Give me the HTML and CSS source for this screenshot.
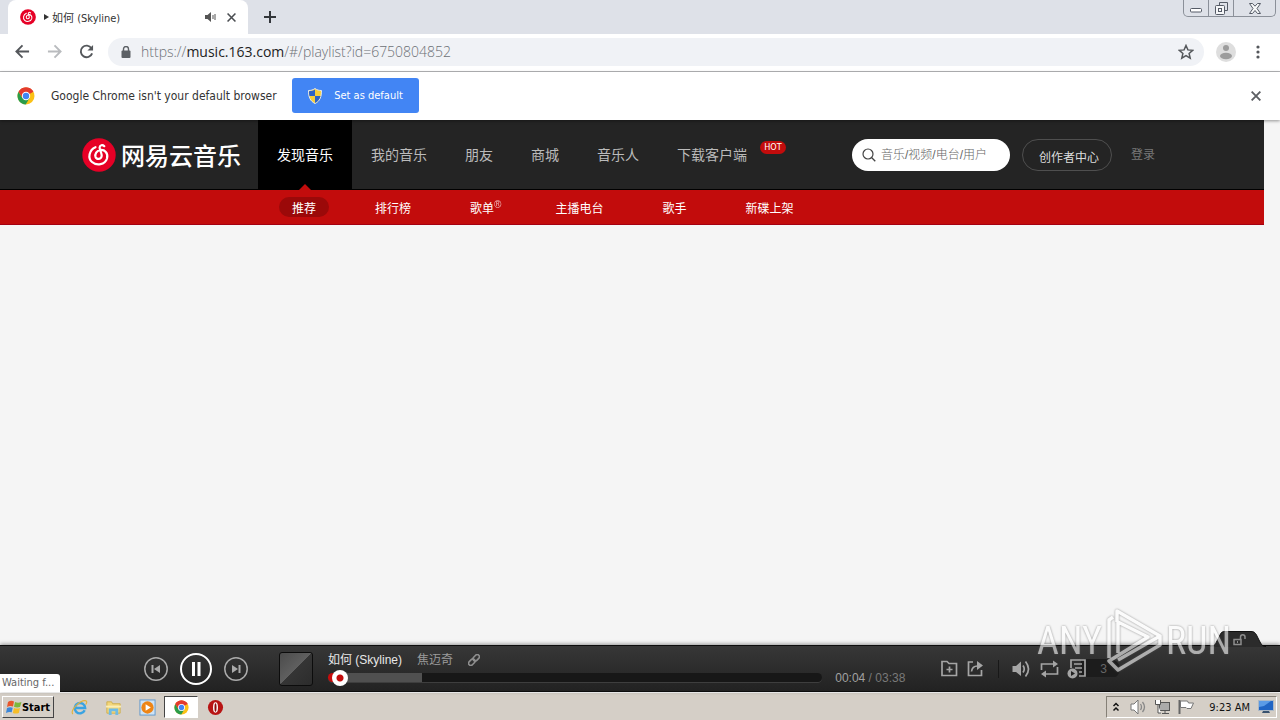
FILE: index.html
```html
<!DOCTYPE html>
<html lang="zh-CN">
<head>
    <meta charset="UTF-8">
    <meta name="viewport" content="width=device-width, initial-scale=1.0">
    <title>如何 (Skyline)</title>
    <link rel="stylesheet" href="styles.css">
</head>
<body>
    <!-- Shared symbols -->
    <svg class="defs" aria-hidden="true">
        <symbol id="chrome" viewBox="0 0 18 18">
            <circle cx="9" cy="9" r="8.5" fill="#fbc116"/>
            <path d="M9 9 L1.6 4.8 A8.5 8.5 0 0 1 16.4 4.8 Z" fill="#e33b2e"/>
            <path d="M1.6 4.8 A8.5 8.5 0 0 0 8.7 17.5 L12.6 11 L9 9 L5.4 11 Z" fill="#2a9c4a"/>
            <path d="M9 4.8 H16.4 A8.5 8.5 0 0 0 1.6 4.8 L5.4 11 Z" fill="#e33b2e"/>
            <circle cx="9" cy="9" r="4.2" fill="#fff"/>
            <circle cx="9" cy="9" r="3.2" fill="#4285f4"/>
        </symbol>
        <symbol id="netease" viewBox="0 0 34 34">
            <circle cx="17" cy="17" r="16.7" fill="#e60026"/>
            <path d="M13.5 9.2 C7 12 5.5 20 10 24 C14.500 28 23 27 25 20.500 C26.500 15 22.500 11.500 18.500 12 C14.500 12.500 12.700 16 13.500 18.800 C14.500 21.800 19.500 21.500 19.700 17.800 C19.800 15 17.500 12 17.600 9.500 C17.700 7 20.500 6.300 22.300 8.200" fill="none" stroke="#fff" stroke-width="2.200" stroke-linecap="round"/>
        </symbol>
    </svg>

    <!-- Browser chrome -->
    <div class="tabstrip">
        <div class="tab">
            <svg class="favicon" viewBox="0 0 34 34"><use href="#netease"/></svg>
            <svg class="tab-play" viewBox="0 0 5 6"><path d="M0 0 L5 3 L0 6 Z" fill="#333"/></svg>
            <span class="tab-title">如何 (Skyline)</span>
            <svg class="tab-audio" viewBox="0 0 12 10"><path d="M0 3 H2.500 L6 0 V10 L2.500 7 H0 Z" fill="#555"/><path d="M8 3 V7 M10 2 V8" stroke="#555"/></svg>
            <button class="tab-close" aria-label="Close tab"><svg viewBox="0 0 8 8"><path d="M0.500 0.500 L7.500 7.500 M7.500 0.500 L0.500 7.500" stroke="#4a4d51" stroke-width="1.400"/></svg></button>
        </div>
        <button class="new-tab" aria-label="New tab"><svg viewBox="0 0 12 12"><path d="M6 0 V12 M0 6 H12" stroke="#33363b" stroke-width="2"/></svg></button>
        <div class="window-controls">
            <button class="wc" aria-label="Minimize"><svg width="12" height="5"><rect x="0.500" y="0.500" width="11" height="3.500" rx="1" fill="#fff" stroke="#555b66"/></svg></button>
            <button class="wc" aria-label="Restore"><svg width="13" height="13"><path d="M4.500 3.500 V0.500 H12.500 V8.500 H9.500" fill="none" stroke="#555b66"/><rect x="0.500" y="3.500" width="9" height="9" rx="1" fill="#f5f6f8" stroke="#555b66"/><rect x="3.500" y="6.500" width="3" height="3" fill="none" stroke="#555b66"/></svg></button>
            <button class="wc wc-close" aria-label="Close"><svg width="12" height="11"><path d="M0.500 0.500 H3.500 L6 3.200 L8.500 0.500 H11.500 L8 5.500 L11.500 10.500 H8.500 L6 7.500 L3.500 10.500 H0.500 L4 5.500 Z" fill="#f8f9fa" stroke="#555b66"/></svg></button>
        </div>
    </div>

    <div class="toolbar">
        <button class="tool" aria-label="Back"><svg viewBox="0 0 16 16"><path d="M15 8 H2 M8 1.500 L1.500 8 L8 14.500" stroke="#54575b"/></svg></button>
        <button class="tool" aria-label="Forward"><svg viewBox="0 0 16 16"><path d="M1 8 H14 M8 1.500 L14.500 8 L8 14.500" stroke="#b9bbbe"/></svg></button>
        <button class="tool" aria-label="Reload"><svg viewBox="0 0 16 16"><path d="M13.300 4.500 A6.200 6.200 0 1 0 14 10" stroke="#54575b"/><path d="M15 1 V7 H9 Z" fill="#54575b"/></svg></button>
        <div class="omnibox">
            <svg class="lock" viewBox="0 0 10 12"><rect x="0.500" y="4.500" width="9" height="7.500" rx="1" fill="#5c6065"/><path d="M2.500 5 V3 A2.500 2.500 0 0 1 7.500 3 V5" fill="none" stroke="#5c6065" stroke-width="1.400"/></svg>
            <span class="url">https://<b>music.163.com</b>/#/playlist?id=6750804852</span>
            <svg class="star" viewBox="0 0 16 16"><path d="M8 1.500 L9.900 5.900 L14.700 6.300 L11.100 9.400 L12.200 14.100 L8 11.600 L3.800 14.100 L4.900 9.400 L1.300 6.300 L6.100 5.900 Z" fill="none" stroke="#54575b" stroke-width="1.500"/></svg>
        </div>
        <svg class="avatar" viewBox="0 0 20 20"><circle cx="10" cy="10" r="10" fill="#dedede"/><circle cx="10" cy="6" r="3" fill="#9c9c9c"/><ellipse cx="10" cy="14" rx="6" ry="3.200" fill="#9c9c9c"/></svg>
        <button class="menu-btn" aria-label="Menu"><svg width="4" height="14"><circle cx="2" cy="2" r="1.600"/><circle cx="2" cy="7" r="1.600"/><circle cx="2" cy="12" r="1.600"/></svg></button>
    </div>

    <div class="infobar">
        <svg class="info-icon" viewBox="0 0 18 18"><use href="#chrome"/></svg>
        <span class="info-text">Google Chrome isn't your default browser</span>
        <button class="default-btn">
            <svg viewBox="0 0 14 16"><path d="M7 0.500 C9 2 11 2.500 13.500 2.500 C13.500 9 12 13 7 15.500 C2 13 0.500 9 0.500 2.500 C3 2.500 5 2 7 0.500 Z" fill="#f6cf3c" stroke="#e5e8ec"/><path d="M7 1.500 V8 H1.500 C1 6 1 4.500 1 3.200 C3.500 3.200 5.500 2.600 7 1.500 Z M7 8 H12.500 C11.800 11 10 13.500 7 15 Z" fill="#2d63c8"/></svg>
            Set as default
        </button>
        <button class="info-close" aria-label="Dismiss"><svg viewBox="0 0 8 8"><path d="M0.500 0.500 L7.500 7.500 M7.500 0.500 L0.500 7.500" stroke="#5c5f63" stroke-width="1.500"/></svg></button>
    </div>

    <!-- Page -->
    <main class="page">
        <header class="topbar">
            <div class="wrap">
                <a class="logo" href="#">
                    <svg viewBox="0 0 34 34"><use href="#netease"/></svg>
                    <span>网易云音乐</span>
                </a>
                <nav class="nav">
                    <a class="active" href="#">发现音乐</a>
                    <a href="#">我的音乐</a>
                    <a href="#">朋友</a>
                    <a href="#">商城</a>
                    <a href="#">音乐人</a>
                    <a href="#">下载客户端<i class="hot">HOT</i></a>
                </nav>
                <div class="account">
                    <label class="search">
                        <svg viewBox="0 0 14 14"><circle cx="6" cy="6" r="5" fill="none" stroke="#444" stroke-width="1.200"/><path d="M9.500 9.500 L13.300 13.300" stroke="#444" stroke-width="1.300"/></svg>
                        <input type="text" placeholder="音乐/视频/电台/用户" aria-label="搜索">
                    </label>
                    <a class="creator" href="#">创作者中心</a>
                    <a class="login" href="#">登录</a>
                </div>
            </div>
        </header>
        <nav class="subnav">
            <div class="wrap">
                <a class="active" href="#">推荐</a>
                <a href="#">排行榜</a>
                <a href="#">歌单<sup>®</sup></a>
                <a href="#">主播电台</a>
                <a href="#">歌手</a>
                <a href="#">新碟上架</a>
            </div>
        </nav>
    </main>

    <!-- Player -->
    <footer class="player">
        <div class="player-lock">
            <svg class="lock-shape" viewBox="0 0 56 16"><path d="M0 16 C4 16 5 14 7 10 L10 4 C11 1.500 12 0.500 15 0.500 H41 C44 0.500 45 1.500 46.500 4 L50 11 C52 14.500 53 16 56 16 Z" fill="#2b2b2b"/><path d="M0 15.500 C4 15.500 5 14 7 10 L10 4 C11 1.500 12 0.500 15 0.500 H41 C44 0.500 45 1.500 46.500 4 L50 11 C52 14.500 53 15.500 56 15.500" fill="none" stroke="#111"/><path d="M24 8.500 H31 V13.500 H24 Z M30.500 8 V6 A2 2 0 0 1 35 6 V8" fill="none" stroke="#8d8d8d" stroke-width="1.500"/><path d="M27.500 10 V12" stroke="#8d8d8d"/></svg>
        </div>
        <div class="controls">
            <button class="ctl" aria-label="上一首"><svg viewBox="0 0 24 24"><circle cx="12" cy="12" r="11.200"/><path class="solid" d="M7.500 8 H9.500 V16 H7.500 Z M16 8 V16 L10 12 Z"/></svg></button>
            <button class="ctl ctl-main" aria-label="暂停"><svg viewBox="0 0 32 32"><circle cx="16" cy="16" r="15"/><path class="solid" d="M12 9 H15 V23 H12 Z M17.500 9 H20.500 V23 H17.500 Z"/></svg></button>
            <button class="ctl" aria-label="下一首"><svg viewBox="0 0 24 24"><circle cx="12" cy="12" r="11.200"/><path class="solid" d="M8 8 L14 12 L8 16 Z M14.500 8 H16.500 V16 H14.500 Z"/></svg></button>
        </div>
        <div class="cover"></div>
        <div class="track">
            <div class="song">
                <a class="song-name" href="#">如何 (Skyline)</a>
                <a class="artist" href="#">焦迈奇</a>
                <svg class="link" viewBox="0 0 12 12"><g fill="none" stroke="#8e8e8e" stroke-width="1.600"><rect x="-3.600" y="-2.200" width="7.200" height="4.400" rx="2.200" transform="translate(8.200 3.800) rotate(-45)"/><rect x="-3.600" y="-2.200" width="7.200" height="4.400" rx="2.200" transform="translate(3.800 8.200) rotate(-45)"/></g></svg>
            </div>
            <div class="progress">
                <input type="range" min="0" max="218" value="2" aria-label="播放进度">
                <span class="time"><em>00:04</em> / 03:38</span>
            </div>
        </div>
        <div class="tools">
            <button class="fav" aria-label="收藏"><svg width="17" height="17" viewBox="0 0 17 17"><path d="M1 15.500 V1.500 H6 L8 3.500 H15.500 V15.500 Z M8.500 6.500 V12.500 M5.500 9.500 H11.500"/></svg></button>
            <button class="share" aria-label="分享"><svg width="17" height="17" viewBox="0 0 17 17"><path d="M6 2 H1.500 V15.500 H14.500 V10"/><path d="M4.500 11.500 C5 7.500 8 6 10.500 6"/><path class="solid" d="M10 1 L16 5.500 L10 10 Z"/></svg></button>
            <button class="volume" aria-label="音量"><svg width="18" height="18" viewBox="0 0 18 18"><path class="solid" d="M0.500 6 H4 L9 1.500 V16 L4 12 H0.500 Z"/><path d="M11 5.500 Q13.500 9 11 12.500 M13.500 1.500 Q19.500 9 13.500 16.500"/></svg></button>
            <button class="loop" aria-label="循环"><svg width="19" height="18" viewBox="0 0 19 18"><path d="M1.500 10 V4 H14 M17.500 7 V14 H5"/><path class="solid" d="M13 0.500 L18 4 L13 7.500 Z M6 10.500 L1 14 L6 17.500 Z"/></svg></button>
            <button class="list" aria-label="播放列表"><svg width="20" height="20" viewBox="0 0 20 20"><path d="M4 9 V1 H18 V17 H12 M7 5 H15 M8 9 H15 M12 13 H15"/><circle class="solid" cx="5.500" cy="14.500" r="5"/><path class="mark" d="M4 12 L8 14.500 L4 17 Z"/></svg><span>3</span></button>
        </div>
        <div class="status">Waiting f...</div>
    </footer>

    <!-- Taskbar -->
    <div class="taskbar">
        <button class="start"><svg viewBox="0 0 16 16"><path d="M2 3 Q5 1 8 2.500 L7 7.500 Q4 6.300 1 8 Z" fill="#e8562b"/><path d="M9 3 Q12 4.500 15.500 3 L14 8 Q11 9 8 7.800 Z" fill="#7cb83c"/><path d="M1 9 Q4 7.500 6.700 8.700 L5.700 13.300 Q3 12.300 0 14 Z" fill="#3b86d8"/><path d="M8 9 Q11 10.200 14 9 L12.800 14 Q10 15.200 6.800 14 Z" fill="#f6bd27"/></svg>Start</button>
        <div class="quick">
            <a href="#" aria-label="Internet Explorer"><svg viewBox="0 0 18 18"><path d="M14.500 12 A5.500 5.500 0 1 1 15 9.500 H5" fill="none" stroke="#39a3e2" stroke-width="2.600"/><path d="M2 16 C-2 12 11 0 16 2 C17.500 3 16 5.500 15.500 6" fill="none" stroke="#e2b23c" stroke-width="1.200"/></svg></a>
            <a href="#" aria-label="Explorer"><svg viewBox="0 0 18 18"><path d="M2 3 H7 L8 5 H16 V15 H2 Z" fill="#f3d77b" stroke="#cfae4d"/><path d="M1 7 H17 V9 H1 Z" fill="#fbeeb4"/><path d="M4 17 V10 H14 V17 H11 V13 H7 V17 Z" fill="#6ebbe5"/></svg></a>
            <a href="#" aria-label="Media Player"><svg viewBox="0 0 18 18"><rect x="1" y="1" width="16" height="16" fill="#cfe3f5" stroke="#5f97cc"/><circle cx="9" cy="9" r="6.500" fill="#ee8516"/><path d="M7 5.500 L12.500 9 L7 12.500 Z" fill="#fff"/></svg></a>
            <a class="open" href="#" aria-label="Chrome"><svg viewBox="0 0 18 18"><use href="#chrome"/></svg></a>
            <a href="#" aria-label="Opera"><svg viewBox="0 0 18 18"><circle cx="9" cy="9" r="8" fill="#b81414"/><ellipse cx="9" cy="9" rx="2.600" ry="5.500" fill="#fff"/><ellipse cx="9" cy="9" rx="1.100" ry="4.500" fill="#8b0d0d"/></svg></a>
        </div>
        <div class="tray">
            <svg width="8" height="10" viewBox="0 0 8 10"><path d="M1.500 4 L4 1.500 L6.500 4 M1.500 8.500 L4 6 L6.500 8.500" fill="none" stroke="#111" stroke-width="1.500"/></svg>
            <svg class="tray-vol" width="17" height="16" viewBox="0 0 17 16"><path d="M1 5 H4 L8 1 V15 L4 11 H1 Z" fill="#fff" stroke="#777"/><path d="M10.500 5 Q12.500 8 10.500 11 M12.500 3 Q16.500 8 12.500 13" fill="none" stroke="#888" stroke-width="1.300"/></svg>
            <svg width="17" height="16" viewBox="0 0 17 16"><rect x="5.500" y="3.500" width="10" height="8" fill="#aaa" stroke="#555"/><path d="M8 14.500 H15 M11 12 V14" stroke="#555"/><path d="M1.500 1 V5.500 H6.500 V1 M4 5.500 V14 H7" fill="#fff" stroke="#555"/></svg>
            <svg width="17" height="16" viewBox="0 0 17 16"><path d="M1.500 1 V15" stroke="#666" stroke-width="2"/><path d="M2.500 2 H9.500 L10.500 4 H15.500 L13 9.500 H9 L8 8.500 H2.500 Z" fill="#fff" stroke="#777"/></svg>
            <span class="clock">9:23 AM</span>
            <svg width="16" height="14" viewBox="0 0 16 14"><rect x="0.500" y="0.500" width="15" height="10" fill="#2165c4" stroke="#adb9c6"/><path d="M1 1 H13 L6 6 L1 7 Z" fill="#5b9be6"/><path d="M4 13 H12 L11 11 H5 Z" fill="#38526f"/></svg>
        </div>
    </div>

    <div class="watermark">
        <span>ANY</span>
        <svg viewBox="0 0 56 64"><path d="M3 49 V11 L7 8 M11 13 V2 L54 27 L12 51 M12 44 V13 L42 28 L3 52 L12 61 L54 36 V27" fill="none" stroke="#fff" stroke-width="3.500" stroke-linejoin="round"/></svg>
        <span>RUN</span>
    </div>
</body>
</html>
```

FILE: styles.css
```css
* {
    box-sizing: border-box;
}
body {
    position: relative;
    display: flex;
    flex-direction: column;
    min-height: 100vh;
    margin: 0;
    overflow: hidden;
    font-family: "Liberation Sans", "Noto Sans CJK SC", sans-serif;
    font-size: 12px;
    background-color: #f5f5f5;
}
a {
    text-decoration: none;
    color: inherit;
}
button {
    display: flex;
    align-items: center;
    justify-content: center;
    padding: 0;
    border: none;
    background: none;
    font: inherit;
    color: inherit;
}
svg {
    flex: none;
    display: block;
}
.defs {
    position: absolute;
    width: 0;
    height: 0;
}

/* browser */
.tabstrip {
    display: flex;
    align-items: flex-start;
    height: 34px;
    padding-left: 8px;
    background-color: #dee1e8;
}
.tab {
    display: flex;
    align-items: center;
    width: 240px;
    height: 34px;
    padding: 0 12px;
    border-radius: 8px 8px 0 0;
    background-color: #fff;
    font-family: "DejaVu Sans Condensed", "Noto Sans CJK SC", sans-serif;
    font-size: 11px;
    color: #333;
}
.favicon {
    width: 16px;
    height: 16px;
}
.tab-play {
    width: 5px;
    height: 6px;
    margin: 0 3px 0 8px;
}
.tab-title {
    flex: 1;
}
.tab-audio {
    width: 12px;
    height: 10px;
    margin-right: 10px;
}
.tab-close svg {
    width: 9px;
    height: 9px;
}
.new-tab {
    width: 44px;
    height: 34px;
}
.new-tab svg {
    width: 12px;
    height: 12px;
}
.window-controls {
    display: flex;
    height: 17px;
    margin: 0 4px 0 auto;
    border: 1px solid #8b9099;
    border-top: none;
    border-radius: 0 0 5px 5px;
}
.wc {
    width: 25px;
    border-right: 1px solid #8b9099;
}
.wc:first-child {
    padding-top: 4px;
}
.wc-close {
    width: 41px;
    border-right: none;
}
.toolbar {
    display: flex;
    align-items: center;
    height: 38px;
    padding: 0 20px 2px 6px;
    border-bottom: 1px solid #b6b7b9;
    background-color: #fff;
}
.tool {
    width: 32px;
    height: 32px;
}
.tool svg {
    width: 15px;
    height: 15px;
    fill: none;
    stroke-width: 2;
}
.omnibox {
    display: flex;
    align-items: center;
    flex: 1;
    height: 28px;
    margin: 0 12px 0 6px;
    padding: 0 10px 0 13px;
    border-radius: 14px;
    background-color: #f0f2f6;
}
.lock {
    width: 10px;
    height: 12px;
}
.url {
    flex: 1;
    margin-left: 10px;
    font-family: "Open Sans", sans-serif;
    font-size: 14px;
    font-weight: 300;
    color: #6c7075;
}
.url b {
    font-weight: 400;
    color: #222;
}
.star {
    width: 16px;
    height: 16px;
}
.avatar {
    width: 20px;
    height: 20px;
}
.menu-btn {
    margin-left: 20px;
    fill: #54575b;
}
.infobar {
    display: flex;
    align-items: center;
    height: 48px;
    padding: 0 19px 1px 17px;
    background-color: #fff;
    font-size: 12px;
    color: #333;
    z-index: 1;
    box-shadow: 0 1px 3px rgba(0, 0, 0, 0.4);
}
.info-icon {
    width: 18px;
    height: 18px;
    margin-right: 16px;
}
.info-text {
    min-width: 228px;
    font-family: "DejaVu Sans Condensed", sans-serif;
    font-size: 12px;
}
.default-btn {
    gap: 12px;
    width: 127px;
    height: 35px;
    margin-left: 13px;
    border-radius: 3px;
    background-color: #4285f4;
    font-family: "DejaVu Sans Condensed", sans-serif;
    font-size: 11px;
    color: #fff;
}
.default-btn svg {
    width: 14px;
    height: 16px;
}
.info-close {
    margin-left: auto;
}
.info-close svg {
    width: 10px;
    height: 10px;
}

/* page */
.page {
    flex: 1;
    padding-right: 16px;
}
.wrap {
    display: flex;
    width: 1100px;
    max-width: 100%;
    margin: 0 auto;
}
.topbar {
    height: 70px;
    border-bottom: 1px solid #000;
    background-color: #242424;
}
.logo {
    display: flex;
    align-items: center;
    gap: 5px;
    width: 176px;
    height: 70px;
    font-family: "Noto Sans CJK SC", sans-serif;
    font-size: 24px;
    line-height: 24px;
    font-weight: 500;
    white-space: nowrap;
    color: #fff;
}
.logo svg {
    width: 34px;
    height: 34px;
}
.nav {
    display: flex;
}
.nav a {
    position: relative;
    height: 69px;
    padding: 0 19px;
    font-size: 14px;
    line-height: 70px;
    white-space: nowrap;
    color: #bbb;
}
.nav .active {
    background-color: #000;
    color: #fff;
}
.nav .active::after {
    content: "";
    position: absolute;
    left: 50%;
    bottom: -1px;
    margin-left: -6px;
    border: 6px solid transparent;
    border-top: none;
    border-bottom-color: #c20c0c;
}
.nav .hot {
    position: absolute;
    top: 21px;
    right: -20px;
    width: 26px;
    height: 13px;
    border-radius: 7px;
    background-color: #c20c0c;
    font-family: "DejaVu Sans Condensed", sans-serif;
    font-size: 9px;
    line-height: 13px;
    font-style: normal;
    text-align: center;
    color: #fff;
}
.account {
    display: flex;
    gap: 12px;
    margin: 19px 27px 0 auto;
}
.search {
    display: flex;
    align-items: center;
    width: 158px;
    height: 32px;
    padding: 0 10px;
    border-radius: 16px;
    background-color: #fff;
}
.search svg {
    width: 14px;
    height: 14px;
}
.search input {
    width: 122px;
    padding: 0 0 0 5px;
    border: none;
    outline: none;
    background: none;
    font: inherit;
    font-weight: 300;
}
.search input::placeholder {
    color: #666;
}
.creator {
    width: 90px;
    height: 32px;
    padding-left: 16px;
    border: 1px solid #4f4f4f;
    border-radius: 16px;
    line-height: 36px;
    white-space: nowrap;
    color: #ddd;
}
.login {
    margin-left: 7px;
    line-height: 32px;
    color: #787878;
}
.subnav {
    height: 35px;
    border-bottom: 1px solid #a40011;
    background-color: #c20c0c;
}
.subnav .wrap {
    gap: 33px;
    padding: 7px 0 0 197px;
}
.subnav a {
    height: 20px;
    padding: 0 13px;
    border-radius: 10px;
    line-height: 24px;
    white-space: nowrap;
    color: #fff;
}
.subnav .active {
    background-color: #9b0909;
}
.subnav sup {
    margin-right: -5px;
    font-size: 10px;
    line-height: 10px;
    opacity: 0.7;
}

/* player */
.player {
    position: relative;
    display: flex;
    align-items: center;
    height: 47px;
    padding: 0 160px 0 144px;
    border-top: 1px solid #0d0d0d;
    border-bottom: 1px solid #0d0d0d;
    background: linear-gradient(#373737, #222);
    box-shadow: 0 -1px 4px rgba(0, 0, 0, 0.4);
}
.player-lock {
    position: absolute;
    top: -15px;
    right: 14px;
}
.lock-shape {
    width: 56px;
    height: 16px;
}
.controls {
    display: flex;
    align-items: center;
    gap: 12px;
}
.ctl svg {
    width: 24px;
    height: 24px;
    fill: none;
    stroke: #aaa;
    stroke-width: 1.5;
}
.ctl .solid {
    fill: #aaa;
    stroke: none;
}
.ctl-main svg {
    width: 32px;
    height: 32px;
    stroke: #fff;
    stroke-width: 2;
}
.ctl-main .solid {
    fill: #fff;
}
.cover {
    flex: none;
    width: 34px;
    height: 34px;
    margin: 0 15px 0 31px;
    border: 1px solid #0c0c0c;
    border-radius: 3px;
    background: linear-gradient(135deg, #4b4b4b, #606060 50%, #353535 50%, #2c2c2c);
}
.track {
    flex: 1;
    min-width: 0;
}
.song {
    display: flex;
    align-items: center;
    gap: 15px;
    height: 18px;
    line-height: 18px;
}
.song-name {
    color: #e8e8e8;
}
.artist {
    color: #9b9b9b;
}
.link {
    width: 12px;
    height: 12px;
}
.progress {
    display: flex;
    align-items: center;
    height: 18px;
}
.progress input {
    appearance: none;
    flex: 1;
    min-width: 0;
    height: 9px;
    margin: 0 13px 0 0;
    border-radius: 5px;
    background: linear-gradient(90deg, #c70c0c 3%, #505050 3%, #505050 19%, #171717 19%);
    box-shadow: 0 1px 0 #3e3e3e;
}
.progress input::-webkit-slider-thumb {
    appearance: none;
    width: 16px;
    height: 16px;
    border-radius: 50%;
    background: radial-gradient(#c20c0c 3px, #fff 4px);
}
.time {
    white-space: nowrap;
    color: #797979;
}
.time em {
    font-style: normal;
    color: #a1a1a1;
}
.tools {
    display: flex;
    align-items: center;
    margin-left: 36px;
}
.tools svg {
    fill: none;
    stroke: #a5a5a5;
    stroke-width: 1.7;
}
.tools .solid {
    fill: #a5a5a5;
    stroke: none;
}
.tools .mark {
    fill: #222;
    stroke: none;
}
.share {
    margin: 0 14px 0 9px;
}
.volume {
    padding-left: 13px;
    border-left: 1px solid #181818;
}
.loop {
    margin: 0 8px 0 10px;
}
.list {
    padding-right: 13px;
    border-radius: 10px;
    background: linear-gradient(#1c1c1c, #1c1c1c) 14px 0 / 100% 18px no-repeat;
    color: #666;
}
.list span {
    padding-left: 13px;
}
.status {
    position: absolute;
    left: 0;
    bottom: -1px;
    width: 60px;
    height: 18px;
    padding-left: 2px;
    border-radius: 0 3px 0 0;
    background-color: #fff;
    font-family: "DejaVu Sans Condensed", sans-serif;
    font-size: 11px;
    line-height: 18px;
    white-space: nowrap;
    color: #666;
}

/* taskbar */
.taskbar {
    display: flex;
    align-items: center;
    height: 28px;
    padding: 1px 3px 0 2px;
    border-top: 1px solid #fff;
    background-color: #d5cfc7;
}
.start {
    width: 52px;
    height: 22px;
    border: 1px solid;
    border-color: #fff #444 #444 #fff;
    font-family: "DejaVu Sans Condensed", sans-serif;
    font-size: 11px;
    font-weight: bold;
    color: #000;
}
.start svg {
    width: 16px;
    height: 16px;
}
.quick {
    display: flex;
    margin-left: 8px;
}
.quick a {
    display: flex;
    align-items: center;
    justify-content: center;
    width: 34px;
    height: 22px;
}
.quick svg {
    width: 17px;
    height: 17px;
}
.quick .open {
    border: 1px solid;
    border-color: #444 #fff #fff #444;
    background-color: #fff;
}
.quick .open svg {
    width: 15px;
    height: 15px;
}
.tray {
    display: flex;
    align-items: center;
    gap: 7px;
    height: 22px;
    margin-left: auto;
    padding: 0 2px 0 5px;
    border: 1px solid;
    border-color: #858077 #fff #fff #858077;
    color: #111;
}
.tray-vol {
    margin-left: 3px;
}
.clock {
    margin: 0 1px 0 7px;
    font-family: "DejaVu Sans Condensed", sans-serif;
    font-size: 11px;
}

/* overlay logo */
.watermark {
    position: absolute;
    right: 49px;
    bottom: 47px;
    display: flex;
    align-items: center;
    gap: 4px;
    font-family: "Roboto Condensed", Roboto, sans-serif;
    font-size: 38px;
    font-weight: 400;
    line-height: 64px;
    color: #fff;
    opacity: 0.6;
    filter: drop-shadow(0 0 1px #555);
    pointer-events: none;
}
.watermark svg {
    width: 56px;
    height: 64px;
}
```
